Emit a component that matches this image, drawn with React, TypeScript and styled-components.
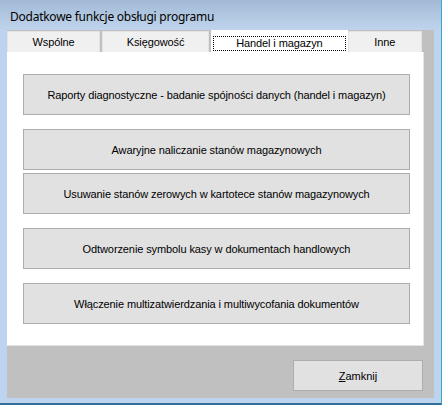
import React from 'react';
import styled, { createGlobalStyle } from 'styled-components';

const GlobalStyle = createGlobalStyle`
  html, body {
    margin: 0;
    padding: 0;
    background: #ffffff;
  }
  * {
    box-sizing: border-box;
  }
`;

const Window = styled.div`
  width: 442px;
  height: 405px;
  display: flex;
  flex-direction: column;
  background: #bcd4ee;
  border-right: 1px solid #3aa6d0;
  border-bottom: 2px solid #2f6f9a;
  font-family: 'Liberation Sans', Arial, sans-serif;
`;

const TitleBar = styled.div`
  height: 30px;
  flex: none;
  display: flex;
  align-items: center;
  padding: 2px 0 0 10px;
  background: linear-gradient(to bottom, #a2b9d6 0%, #b4cae3 60%, #bfd4ec 100%);
  font-family: 'Noto Sans', 'Open Sans', sans-serif;
  font-size: 12px;
  letter-spacing: -0.25px;
  color: #000;
`;

const Client = styled.div`
  flex: 1;
  margin: 0 7px 5px 7px;
  background: #c0c0c0;
  display: flex;
  flex-direction: column;
`;

const TabStrip = styled.div`
  height: 22px;
  display: flex;
  align-items: flex-end;
  padding-right: 10px;
`;

const Tab = styled.div<{ $active?: boolean; $width: number }>`
  width: ${(p) => p.$width}px;
  height: ${(p) => (p.$active ? 23 : 21)}px;
  margin-right: ${(p) => (p.$active ? 0 : 2)}px;
  margin-bottom: ${(p) => (p.$active ? -1 : 0)}px;
  display: flex;
  align-items: center;
  justify-content: center;
  background: ${(p) => (p.$active ? '#ffffff' : '#f0f0f0')};
  border: 1px solid ${(p) => (p.$active ? '#ffffff' : '#e3e3e3')};
  border-bottom: none;
  font-size: 11px;
  letter-spacing: -0.1px;
  color: #000;
  white-space: nowrap;
  position: relative;
  z-index: ${(p) => (p.$active ? 1 : 0)};
`;

const FocusLabel = styled.span`
  width: calc(100% - 2px);
  height: 15px;
  margin-top: 2px;
  display: flex;
  align-items: center;
  justify-content: center;
  border: 1px dotted #000;
`;

const Page = styled.div`
  height: 294px;
  margin-right: 10px;
  background: #ffffff;
  border-right: 1px solid #e3e3e3;
  border-bottom: 1px solid #e3e3e3;
  padding: 22px 13px 0 16px;
  display: flex;
  flex-direction: column;
`;

const ActionButton = styled.button<{ $gap: number }>`
  height: 41px;
  margin-bottom: ${(p) => p.$gap}px;
  background: #e1e1e1;
  border: 1px solid #adadad;
  font-family: 'Liberation Sans', Arial, sans-serif;
  font-size: 11px;
  letter-spacing: -0.1px;
  color: #000;
  padding: 0;
`;

const Footer = styled.div`
  flex: 1;
  display: flex;
  justify-content: flex-end;
  align-items: flex-start;
  padding: 14px 11px 0 0;
`;

const CloseButton = styled.button`
  width: 130px;
  height: 31px;
  background: #e1e1e1;
  border: 1px solid #adadad;
  font-family: 'Liberation Sans', Arial, sans-serif;
  font-size: 11px;
  color: #000;
  padding: 0;

  u {
    text-decoration: underline;
  }
`;

const actions = [
  { label: 'Raporty diagnostyczne - badanie spójności danych (handel i magazyn)', gap: 14 },
  { label: 'Awaryjne naliczanie stanów magazynowych', gap: 3 },
  { label: 'Usuwanie stanów zerowych w kartotece stanów magazynowych', gap: 14 },
  { label: 'Odtworzenie symbolu kasy w dokumentach handlowych', gap: 14 },
  { label: 'Włączenie multizatwierdzania i multiwycofania dokumentów', gap: 0 },
];

const App = () => {
  return (
    <>
      <GlobalStyle />
      <Window>
        <TitleBar>Dodatkowe funkcje obsługi programu</TitleBar>
        <Client>
          <TabStrip>
            <Tab $width={94}>Wspólne</Tab>
            <Tab $width={108}>Księgowość</Tab>
            <Tab $active $width={138}>
              <FocusLabel>Handel i magazyn</FocusLabel>
            </Tab>
            <Tab $width={75}>Inne</Tab>
          </TabStrip>
          <Page>
            {actions.map((a) => (
              <ActionButton key={a.label} $gap={a.gap}>
                {a.label}
              </ActionButton>
            ))}
          </Page>
          <Footer>
            <CloseButton>
              <u>Z</u>amknij
            </CloseButton>
          </Footer>
        </Client>
      </Window>
    </>
  );
};

export default App;
